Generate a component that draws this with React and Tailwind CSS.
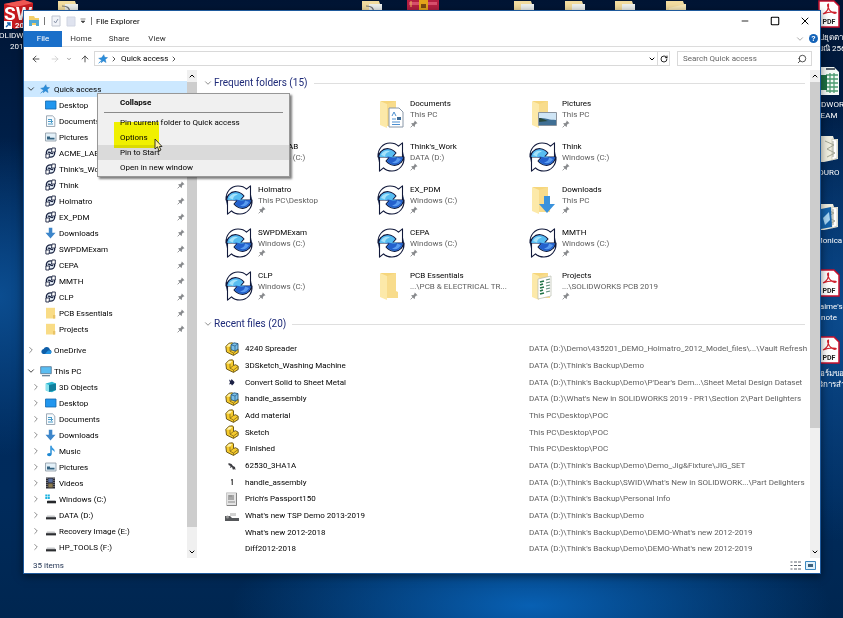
import React from "react";
import {
  ArrowLeft, ArrowRight, ArrowUp, ChevronDown, ChevronRight, ChevronUp,
  Minus, RotateCw, Search, Square, X,
} from "lucide-react";

function PdmIcon({ className }) {
  const arrow = "M1 15C.5 7 6 1 13 1c3.500 0 6.500 1 8.500 3.200L25.500.8V15H15.500l3.500-4C15 6 8 5 4 9.500 2.500 11 1.500 13 1 15z";
  return (
    <svg viewBox="0 0 28 30" className={className} aria-hidden="true">
      <circle cx="14" cy="15" r="12.500" fill="#3f8fe6" stroke="#10183a" />
      <path d={arrow} fill="#fff" stroke="#10183a" strokeWidth="1.100" strokeLinejoin="round" />
      <path d={arrow} transform="rotate(180 14 15)" fill="#fff" stroke="#10183a" strokeWidth="1.100" strokeLinejoin="round" />
      <path d="M2.500 15C3 10 7 7 11 7.500c3 0 5 1.500 7 3.500l-3 3.500h5l-3 2.500-5-2H2.500z" fill="#58bdf0" />
      <path d="M25.500 15c-.5 5-4.500 8-8.500 7.500-3 0-5-1.500-7-3.500l3-3.500H8l3-1 5 1z" fill="#2460cc" />
      <path d="M4 13c2-4 6-5 9-3.500C10 10 8 12 8 14.500z" fill="#a5e2fa" />
      <path d="M24 17c-2 4-6 5-9 3.500 3-.5 5-2.500 5-5z" fill="#5a9cf0" />
    </svg>
  );
}

function SmallPdm() {
  return (
    <svg viewBox="0 0 12 12" className="h-3 w-3" aria-hidden="true">
      <circle cx="5.500" cy="6" r="4.200" fill="#e4edf6" stroke="#1b2442" strokeWidth="1.300" />
      <path d="M7 1h3.300v4H6.500zM4 11H.9V7h3.600z" fill="#fff" stroke="#1b2442" strokeWidth="0.900" />
      <path d="M3 5.600c1.500-1.800 3.300 2 5 .6" stroke="#1b2442" strokeWidth="1.500" fill="none" />
    </svg>
  );
}

function BigFolder({ kind }) {
  return (
    <svg viewBox="0 0 28 30" className="h-[30px] w-7" aria-hidden="true">
      <path d="M4 2h15v24H4z" fill="#f6d67c" />
      <path d="M3 2l7 3v24l-7-3z" fill="#fce9a9" />
      <path d="M10 5l9-3v18l2 1v6H10z" fill="#f8dc8c" />
      {kind === "documents" && (
        <g>
          <path d="M12 9h10l4 4v15H12z" fill="#fff" stroke="#8a98a8" />
          <path d="M15 17l2-4 2 4M15 20h4M15 23h8M15 25.500h8" stroke="#4c8fd0" fill="none" />
          <path d="M20 18h4v3h-4z" fill="#3d6b96" />
        </g>
      )}
      {kind === "pictures" && (
        <g>
          <path d="M9.500 13.500h18v13h-18z" fill="#cfe5f5" stroke="#8b949e" />
          <path d="M10 20c5-2 8 1 17 1v5H10z" fill="#3f6f94" />
          <path d="M10 19c4 0 5 2 9 3l-9 1z" fill="#28493e" />
        </g>
      )}
      {kind === "downloads" && <path d="M15 11h6v8h5l-8 9-8-9h5z" fill="#3a92dc" />}
      {kind === "projects" && (
        <g>
          <path d="M9 8l13-3v20l-13 3z" fill="#fff" stroke="#b8bcae" strokeWidth=".7" />
          <path d="M11 11l4-1M11 14l3-1M11 17l4-1M11 20l3-1M11 23l4-1" stroke="#217346" strokeWidth="1.800" />
          <path d="M17 9l4-1M17 12l4-1M17 15l4-1M17 18l4-1M17 21l4-1" stroke="#5d8b78" strokeWidth="1.200" />
        </g>
      )}
    </svg>
  );
}

function Star() {
  return (
    <svg viewBox="0 0 12 12" className="h-2.5 w-2.5 shrink-0" aria-hidden="true">
      <path d="M7 .8l1 3.200 3.500.3-2.800 2.300 1 3.700-3.200-2-2.800 2.300.4-3.300L.8 5.200l3.500-.8z" fill="#2a8ddb" stroke="#2378bd" strokeWidth=".5" />
      <path d="M.8 11.200l3-3.200" stroke="#2a8ddb" />
    </svg>
  );
}

function Pin() {
  return (
    <svg viewBox="0 0 10 10" className="h-2 w-2 shrink-0" aria-hidden="true">
      <path d="M6 .7l3.300 3.300-1 .6-.6-.1-1.600 1.600.1 1.800-.8.7L1.600 4.700l.7-.8 1.800.1 1.600-1.700-.1-.7z" fill="#87898c" />
      <path d="M3.600 6.400L.8 9.200" stroke="#87898c" strokeWidth="1.100" />
    </svg>
  );
}

const glyphs = {
  desktop: <path d="M.5 2h10.500v8H.5z" fill="#2196ee" stroke="#1468ac" strokeWidth=".8" />,
  documents: (
    <g><path d="M1.500.8h6L9.800 3v8.500H1.500z" fill="#f7fbfe" stroke="#8796a5" strokeWidth=".8" /><path d="M3 4.500h3M3 6.500h5M3 9h5M6.500 4v4" stroke="#4b9bc8" /></g>
  ),
  pictures: (
    <g><path d="M.5 2H11v8H.5z" fill="#e3f0f8" stroke="#8996a1" strokeWidth=".8" /><path d="M2 5.500h3v1.200h4.500V8.500H2z" fill="#33617f" /></g>
  ),
  downloads: <path d="M3.800.8h3.500v5h3.200L5.500 11.500.5 5.800h3.300z" fill="#3d86ca" />,
  folder: <g><path d="M1 .8h9v10.700H1z" fill="#f9dc86" /><path d="M8 8h2.300v3.500H8z" fill="#e9c367" /></g>,
  onedrive: <g><path d="M3 10h7a2.300 2.300 0 0 0 0-4.300A3.400 3.400 0 0 0 3.600 5 2.600 2.600 0 0 0 3 10z" fill="#0e5ea8" /><path d="M5 10l3-3.500h2.500A2 2 0 0 1 10 10z" fill="#2392e0" /></g>,
  pc: <g><path d="M.7 1.700h10.600v7H.7z" fill="#59bdf2" stroke="#56718a" strokeWidth=".8" /><path d="M2 10.700h8" stroke="#5c7990" strokeWidth="1.200" /></g>,
  objects: <g><path d="M.8 2.500L7 .8l4 1.700V9L7 11.300.8 9.500z" fill="#2cb8d2" /><path d="M4 4l7-1.500V9L4 11z" fill="#127f9c" /><path d="M.8 2.500L4 4v7L.8 9.500z" fill="#8ae2ee" /></g>,
  music: <g><path d="M6 .8v8.500" stroke="#1e88d2" strokeWidth="1.400" /><path d="M6 .8c1 2.500 4.500 3 3.500 6.500C9 5.500 7.500 5 6 4.500z" fill="#3a9be0" /><ellipse cx="4.300" cy="9.600" rx="2.300" ry="1.700" fill="#1e88d2" /></g>,
  videos: <g><path d="M1 .5h9v11H1z" fill="#2b2b33" /><path d="M3.300 1.500h4.400v4H3.300z" fill="#5a6fa0" /><path d="M3.300 6.500h4.400v4H3.300z" fill="#8a7a50" /><path d="M2 1v10M9 1v10" stroke="#c9c9d0" strokeDasharray="1 1" strokeWidth=".8" /></g>,
  windows: <g><path d="M.3 1.500h2v2h-2zM2.800 1.500h2v2h-2zM.3 4h2v2h-2zM2.800 4h2v2h-2z" fill="#1db2df" /><path d="M2.500 7h8v1h-8z" fill="#b9bcbf" /><path d="M2 8h9v2.300H2z" fill="#26282b" /></g>,
  drive: <g><path d="M2 6.500h7.500L11 8.500H1z" fill="#c6c8ca" /><path d="M1 8.200h10v2.200H1z" fill="#2c2e31" /></g>,
};

function NavIcon({ name }) {
  if (name === "pdm") return <SmallPdm />;
  return <svg viewBox="0 0 12 12" className="h-3 w-3 shrink-0" aria-hidden="true">{glyphs[name]}</svg>;
}

function FileIcon({ name }) {
  return (
    <svg viewBox="0 0 14 14" className="h-3.5 w-3.5" aria-hidden="true">
      {(name === "assembly" || name === "part") && (
        <g>
          <path d="M.8 4.500L4 1.200 7.500.8 8.500 2v4.500l2-.8 2.700 1.500v3.300L8.500 13.400 1.500 10z" fill="#f6cb2c" stroke="#5f4c12" strokeWidth=".9" strokeLinejoin="round" />
          <path d="M1.500 4.500L4.300 1.800l3 .1L5 4.800z" fill="#fff1a8" />
          <path d="M5 4.800v4.400L8.500 11l4.500-3.500M8.500 11v2.200M5 9.200l3.500-2.700" stroke="#87691a" strokeWidth=".8" fill="none" />
          {name === "assembly" && <g><path d="M6 2.800l3-2 4 .8v5.500l-3 2-4-1.500z" fill="#79bfe9" stroke="#26587e" strokeWidth=".9" /><path d="M6 2.800l4 1.200 3-2.400M10 4v5" stroke="#26587e" strokeWidth=".7" fill="none" /></g>}
        </g>
      )}
      {name === "metal" && <path d="M4 4.500l2 1.200.5-1.700 3 3-.5 1.500-2 2-1-1.500-2 .5 1-2z" fill="#1c2145" />}
      {name === "jig" && <path d="M3.500 4l3 1 1.500 2 2 1 .5 3-1.500-1-1 1-1-3-2 1 .5-2-2-1z" fill="#3d3d42" />}
      {name === "handle" && <path d="M6.500 4h1.300v6H6.700V5.500h-.8z" fill="#383838" />}
      {name === "passport" && <g><path d="M1.500.8h10v12.700h-10z" fill="#e4e4e4" stroke="#b6b6b6" strokeWidth=".7" /><path d="M3 3h6v5H3z" fill="#a8a8a8" /><path d="M3 10h7M4 4h3" stroke="#8a8a8a" /><path d="M11.500 1v12.500H2" stroke="#666" fill="none" strokeWidth=".7" /></g>}
      {name === "demo" && <g><path d="M0 7h5l2 2h7v3H0z" fill="#55575a" /><path d="M5 4h6v3H5z" fill="#d2d2d2" /><circle cx="2.500" cy="8" r="1.500" fill="#999" /></g>}
    </svg>
  );
}

const quick = [
  ["Desktop", "desktop"], ["Documents", "documents"], ["Pictures", "pictures"],
  ["ACME_LAB", "pdm"], ["Think's_Work", "pdm"], ["Think", "pdm"], ["Holmatro", "pdm"],
  ["EX_PDM", "pdm"], ["Downloads", "downloads"], ["SWPDMExam", "pdm"], ["CEPA", "pdm"],
  ["MMTH", "pdm"], ["CLP", "pdm"], ["PCB Essentials", "folder"], ["Projects", "folder"],
];
const pc = [
  ["3D Objects", "objects"], ["Desktop", "desktop"], ["Documents", "documents"],
  ["Downloads", "downloads"], ["Music", "music"], ["Pictures", "pictures"], ["Videos", "videos"],
  ["Windows (C:)", "windows"], ["DATA (D:)", "drive"], ["Recovery Image (E:)", "drive"], ["HP_TOOLS (F:)", "drive"],
];
const folders = [
  ["Desktop", "This PC", "plain"], ["Documents", "This PC", "documents"], ["Pictures", "This PC", "pictures"],
  ["ACME_LAB", "Windows (C:)", "pdm"], ["Think's_Work", "DATA (D:)", "pdm"], ["Think", "Windows (C:)", "pdm"],
  ["Holmatro", "This PC\\Desktop", "pdm"], ["EX_PDM", "Windows (C:)", "pdm"], ["Downloads", "This PC", "downloads"],
  ["SWPDMExam", "Windows (C:)", "pdm"], ["CEPA", "Windows (C:)", "pdm"], ["MMTH", "Windows (C:)", "pdm"],
  ["CLP", "Windows (C:)", "pdm"], ["PCB Essentials", "...\\PCB & ELECTRICAL TR...", "plain"], ["Projects", "...\\SOLIDWORKS PCB 2019", "projects"],
];
const files = [
  ["4240 Spreader", "DATA (D:)\\Demo\\435201_DEMO_Holmatro_2012_Model_files\\...\\Vault Refresh", "assembly"],
  ["3DSketch_Washing Machine", "DATA (D:)\\Think's Backup\\Demo", "part"],
  ["Convert Solid to Sheet Metal", "DATA (D:)\\Think's Backup\\Demo\\P'Dear's Dem...\\Sheet Metal Design Dataset", "metal"],
  ["handle_assembly", "DATA (D:)\\What's New in SOLIDWORKS 2019 - PR1\\Section 2\\Part Delighters", "assembly"],
  ["Add material", "This PC\\Desktop\\POC", "part"],
  ["Sketch", "This PC\\Desktop\\POC", "part"],
  ["Finished", "This PC\\Desktop\\POC", "part"],
  ["62530_3HA1A", "DATA (D:)\\Think's Backup\\Demo\\Demo_Jig&Fixture\\JIG_SET", "jig"],
  ["handle_assembly", "DATA (D:)\\Think's Backup\\SWID\\What's New in SOLIDWORK...\\Part Delighters", "handle"],
  ["Prich's Passport150", "DATA (D:)\\Think's Backup\\Personal Info", "passport"],
  ["What's new TSP Demo 2013-2019", "DATA (D:)\\Think's Backup\\Demo", "demo"],
  ["What's new 2012-2018", "DATA (D:)\\Think's Backup\\Demo\\DEMO-What's new 2012-2019", ""],
  ["Diff2012-2018", "DATA (D:)\\Think's Backup\\Demo\\DEMO-What's new 2012-2019", ""],
];

function NavItem({ label, icon, expandable, pinned }) {
  return (
    <li>
      <button className="flex h-4 w-full items-center pr-0.5 pl-[7px] text-left">
        <span className="w-3.5 shrink-0">{expandable && <ChevronRight className="h-2.5 w-2.5 text-[#777]" />}</span>
        <NavIcon name={icon} />
        <span className="ml-0.5 flex-1 whitespace-nowrap">{label}</span>
        {pinned && <Pin />}
      </button>
    </li>
  );
}

function NavRoot({ label, icon, open, selected }) {
  const Chevron = open ? ChevronDown : ChevronRight;
  return (
    <button className={selected ? "flex h-4 w-full items-center bg-[#cce8ff] pl-0.5" : "flex h-4 w-full items-center pl-0.5"}>
      <Chevron className={open ? "h-2.5 w-2.5 text-[#222]" : "h-2.5 w-2.5 text-[#777]"} />
      <span className="ml-1 flex w-3.5 shrink-0">{icon}</span>
      <span className="whitespace-nowrap">{label}</span>
    </button>
  );
}

function ScrollBar({ thumb, rest }) {
  return (
    <div className="flex w-2.5 shrink-0 flex-col bg-[#f0f0f0]">
      <button aria-label="Scroll up" className="flex h-3 items-center justify-center"><ChevronUp className="h-2 w-2" strokeWidth={3} /></button>
      <div className={thumb} />
      <div className={rest} />
      <button aria-label="Scroll down" className="flex h-3 items-center justify-center"><ChevronDown className="h-2 w-2" strokeWidth={3} /></button>
    </div>
  );
}

function GroupHeader({ children }) {
  return (
    <div className="flex h-6 items-center pl-1.5">
      <ChevronDown className="h-2.5 w-2.5 text-[#777]" />
      <h2 className="ml-px text-[10px] leading-[14px] whitespace-nowrap text-[#1e2a78]">{children}</h2>
      <div className="mr-[5px] ml-1.5 h-px flex-1 bg-[#dfdfdf]" />
    </div>
  );
}

function PdfIcon() {
  return (
    <svg viewBox="0 0 22 28" className="h-7 w-[22px]" aria-hidden="true">
      <path d="M1 1h15l5 5v21H1z" fill="#fff" stroke="#c8102e" strokeWidth="1.500" />
      <path d="M5 14c4-2 6-6 5.500-10-1.500 0-1 3 1 6 2 2.500 5 4 6.500 3s-6-2-13 1z" fill="none" stroke="#d0202c" strokeWidth="1.200" />
      <text x="11" y="24" fontSize="7" fontWeight="700" textAnchor="middle" fill="#222" fontFamily="Roboto, sans-serif">PDF</text>
    </svg>
  );
}

function SheetIcon() {
  return (
    <svg viewBox="0 0 22 28" className="h-7 w-[22px]" aria-hidden="true">
      <path d="M3 0h13l5 5v23H3z" fill="#f5faf7" />
      <path d="M8 8h12M8 12h12M8 16h12M8 20h12M8 24h12M12 6v20M16 6v20" stroke="#4b9b70" strokeWidth="1.300" />
      <path d="M0 8h9v15H0z" fill="#1d7044" />
      <path d="M8 2h9" stroke="#56616b" strokeWidth="2" />
    </svg>
  );
}

function PapersIcon({ blue }) {
  return (
    <svg viewBox="0 0 22 28" className="h-7 w-[22px]" aria-hidden="true">
      <path d="M3 1h12l1 3h4v20l-14 3H3z" fill="#efeee0" />
      <path d="M14 4l5 1v18l-5 2z" fill="#fff" stroke="#b9b9a5" strokeWidth=".6" />
      <path d="M7 6l9 4-7 4 8 4-8 4M15 6v16" stroke="#9c9f8d" fill="none" strokeWidth=".9" />
      {blue && <g><path d="M3 6l10-2 1 20-11 2z" fill="#1463ab" /><path d="M5 15l6-6 1 8-5 5z" fill="#a8d6f3" /></g>}
    </svg>
  );
}

function SideIcon({ top, icon, lines }) {
  return (
    <div className={`absolute -right-[22px] flex w-[72px] flex-col items-center text-center text-white ${top}`}>
      {icon}
      <div className="mt-1 whitespace-nowrap">{lines.map((l) => <div key={l}>{l}</div>)}</div>
    </div>
  );
}

function PeekFolder({ left, mark }) {
  return (
    <svg viewBox="0 0 20 12" className={`absolute top-px h-3 w-5 ${left}`} aria-hidden="true">
      <path d="M0 0h17l1 3h2v9H0z" fill="#f3dda0" />
      {mark === "plain" ? <path d="M3 7l17-4v9H3z" fill="#f9e9b8" /> : <path d="M7 3h13v9H7z" fill="#eef1ee" />}
      {mark === "curve" && <path d="M4 5c6 0 7 2 8 6" stroke="#6f7075" fill="none" strokeWidth="1.200" />}
    </svg>
  );
}

export default function App() {
  return (
    <div className="relative min-h-screen overflow-hidden bg-[#002555] bg-[radial-gradient(ellipse_300px_90px_at_63%_98%,#0860b3,transparent),radial-gradient(ellipse_120px_160px_at_0%_48%,#0b4d90,transparent),radial-gradient(ellipse_160px_220px_at_100%_52%,#0b4a8c,transparent),linear-gradient(#001534,#00295c_45%,#002b5c_80%,#002650)] font-[Roboto,'Noto_Sans',sans-serif] text-[8px] leading-[11px] text-black">
      <div className="absolute top-0 -left-5 flex w-[78px] flex-col items-center text-center text-white">
        <svg viewBox="0 0 30 30" className="h-[30px] w-[30px]" aria-hidden="true">
          <path d="M0 4L20 0l9 3v22l-18 4-11-4z" fill="#c81b20" />
          <path d="M0 4L20 0l9 3-17 4z" fill="#ee5753" />
          <text x="0" y="20" fontSize="19" fontWeight="700" fill="#fff" fontFamily="Roboto, sans-serif">SW</text>
          <path d="M0 21h8v8H0z" fill="#fff" /><path d="M2 27l4-4M3 23h3v3" stroke="#1766b0" fill="none" strokeWidth="1.300" />
          <text x="11" y="28" fontSize="8" fontWeight="700" fill="#fff" fontFamily="Roboto, sans-serif">2019</text>
        </svg>
        <div className="whitespace-nowrap">SOLIDWORKS</div>
        <div>2019</div>
      </div>
      <PeekFolder left="left-[58px]" mark="curve" />
      <PeekFolder left="left-[362px]" mark="curve" />
      <svg viewBox="0 0 32 12" className="absolute top-0 left-[407px] h-3 w-8" aria-hidden="true">
        <path d="M0 0h32v12H0z" fill="#b51f42" /><path d="M2 2h28v3H2z" fill="#d8506d" /><path d="M12 0h9v12h-9z" fill="#e5a51b" /><path d="M14 4h5v4h-5z" fill="#7c4b12" /><path d="M4 1v6" stroke="#f2bd59" />
      </svg>
      <PeekFolder left="left-[514px]" mark="doc" />
      <PeekFolder left="left-[565px]" mark="doc" />
      <PeekFolder left="left-[615px]" mark="doc" />
      <PeekFolder left="left-[666px]" mark="plain" />

      <SideIcon top="top-0" icon={<PdfIcon />} lines={["สรุปยุดตาม", "ฉบับณิ 2561"]} />
      <SideIcon top="top-[67px]" icon={<SheetIcon />} lines={["SOLIDWORKS", "EAM"]} />
      <SideIcon top="top-[135px]" icon={<PapersIcon />} lines={["DURO"]} />
      <SideIcon top="top-[203px]" icon={<PapersIcon blue />} lines={["Monica"]} />
      <SideIcon top="top-[269px]" icon={<PdfIcon />} lines={["Taime's", "note"]} />
      <SideIcon top="top-[336px]" icon={<PdfIcon />} lines={["ฟอร์มขอ", "บริการสำ"]} />

      <main className="relative mt-2.5 mr-[22px] ml-[23px] border border-[#1f5a9c] bg-white shadow-[0_2px_8px_rgba(0,0,0,0.5)]">
        <header className="flex h-5 items-center pl-1">
          <svg viewBox="0 0 12 12" className="h-3 w-3" aria-hidden="true"><path d="M1 1h5l1 2h4v7H1z" fill="#f4cf68" /><path d="M1 5h10v6H8V8H4v3H1z" fill="#52a8d4" /></svg>
          <span className="ml-1 h-2 w-px bg-[#777]" />
          <svg viewBox="0 0 10 12" className="ml-1.5 h-3 w-2.5" aria-hidden="true"><path d="M1 1h8v10H1z" fill="#f1f3f8" stroke="#c0c5d0" /><path d="M3 6l1.500 2L7 4" stroke="#8a94a8" fill="none" /></svg>
          <svg viewBox="0 0 10 12" className="ml-[5px] h-3 w-2.5" aria-hidden="true"><path d="M1 2h8v9H1z" fill="#dfe3ef" stroke="#d0d5e2" /></svg>
          <svg viewBox="0 0 6 6" className="ml-1 h-1.5 w-1.5" aria-hidden="true"><path d="M.5 1h5M1 3h4L3 5z" stroke="#444" fill="#444" strokeWidth=".6" /></svg>
          <span className="ml-[5px] h-2 w-px bg-[#777]" />
          <h1 className="ml-1 flex-1">File Explorer</h1>
          <button aria-label="Minimize" className="flex w-[30px] justify-center"><Minus className="h-2.5 w-2.5" /></button>
          <button aria-label="Maximize" className="flex w-[30px] justify-center"><Square className="h-2.5 w-2.5" strokeWidth={2.500} /></button>
          <button aria-label="Close" className="flex w-[30px] justify-center"><X className="h-3 w-3" /></button>
        </header>

        <nav className="flex h-4 items-center border-b border-[#dcdcdc] text-[#333]">
          <button className="h-4 w-[38px] bg-[#1a6fc9] text-white">File</button>
          <button className="w-[38px]">Home</button>
          <button className="w-[38px]">Share</button>
          <button className="w-[38px]">View</button>
          <span className="flex-1" />
          <button aria-label="Expand the ribbon"><ChevronDown className="h-2.5 w-2.5 text-[#999]" /></button>
          <button aria-label="Help" className="mr-0.5 ml-1 h-[9px] w-[9px] rounded-full bg-[#1463b8] text-[8px] leading-[9px] font-bold text-white">?</button>
        </nav>

        <div className="flex h-[23px] items-center pr-2 pl-[7px]">
          <button aria-label="Back"><ArrowLeft className="h-2.5 w-2.5 text-[#333]" /></button>
          <button aria-label="Forward" className="ml-[9px]"><ArrowRight className="h-2.5 w-2.5 text-[#ccc]" /></button>
          <button aria-label="Recent locations" className="ml-1.5"><ChevronDown className="h-1.5 w-1.5 text-[#777]" strokeWidth={3} /></button>
          <button aria-label="Up" className="ml-2"><ArrowUp className="h-2.5 w-2.5 text-[#333]" /></button>
          <div className="ml-1 flex h-[15px] flex-1 items-center border border-[#d9d9d9] pl-[3px]">
            <Star />
            <ChevronRight className="ml-0.5 h-2 w-2" />
            <a href="#quick" className="ml-[3px]">Quick access</a>
            <ChevronRight className="ml-0.5 h-2 w-2" />
            <span className="flex-1" />
            <button aria-label="Previous locations"><ChevronDown className="h-2 w-2" strokeWidth={3} /></button>
            <button aria-label="Refresh" className="ml-px flex h-[13px] w-3 items-center justify-center border-l border-[#d9d9d9]"><RotateCw className="h-2 w-2" strokeWidth={2.500} /></button>
          </div>
          <label className="ml-[7px] flex h-[15px] w-[135px] items-center border border-[#d9d9d9] pr-1 pl-[5px]">
            <input type="search" aria-label="Search Quick access" placeholder="Search Quick access" className="min-w-0 flex-1 outline-none placeholder:text-[#666]" />
            <Search className="h-2.5 w-2.5 -scale-x-100 text-[#333]" />
          </label>
        </div>

        <div className="flex">
          <aside className="flex w-[173px] shrink-0">
            <div className="min-w-0 flex-1 pt-[11px] pb-[3px]">
              <NavRoot label="Quick access" icon={<Star />} open selected />
              <ul>{quick.map(([l, i], n) => <NavItem key={l} label={l} icon={i} pinned={n > 0} />)}</ul>
              <div className="py-[5px]"><NavRoot label="OneDrive" icon={<NavIcon name="onedrive" />} /></div>
              <NavRoot label="This PC" icon={<NavIcon name="pc" />} open />
              <ul>{pc.map(([l, i]) => <NavItem key={l} label={l} icon={i} expandable />)}</ul>
            </div>
            <ScrollBar thumb="grow-[445] bg-[#cdcdcd]" rest="grow-[19]" />
          </aside>

          <section className="min-w-0 flex-1 pt-px">
            <GroupHeader>Frequent folders (15)</GroupHeader>
            <ul className="grid grid-cols-[repeat(auto-fill,152px)] pt-0.5 pl-7">
              {folders.map(([name, place, kind]) => (
                <li key={name}>
                  <button className="flex h-[43px] w-full items-start pt-px text-left">
                    <span className="w-[33px] shrink-0 pt-px">{kind === "pdm" ? <PdmIcon className="h-[30px] w-7" /> : <BigFolder kind={kind} />}</span>
                    <span className="flex flex-col whitespace-nowrap">
                      <span>{name}</span>
                      <span className="text-[#5e5e5e]">{place}</span>
                      <Pin />
                    </span>
                  </button>
                </li>
              ))}
            </ul>
            <GroupHeader>Recent files (20)</GroupHeader>
            <div className="pt-1 pl-7">
              <table className="w-full table-fixed border-collapse whitespace-nowrap">
                <colgroup>
                  <col className="w-5" />
                  <col className="w-[284px]" />
                  <col />
                </colgroup>
                <tbody>
                  {files.map(([name, path, icon]) => (
                    <tr key={name + path} className="h-[17px] nth-[3n]:h-4">
                      <td className="p-0"><FileIcon name={icon} /></td>
                      <td className="p-0">{name}</td>
                      <td className="p-0 text-[#5e5e5e]">{path}</td>
                    </tr>
                  ))}
                </tbody>
              </table>
            </div>
          </section>
          <ScrollBar thumb="grow-[346] bg-[#cdcdcd]" rest="grow-[118]" />
        </div>

        <footer className="flex h-[15px] items-center justify-between pr-1 pl-[9px] text-[#1e3050]">
          <span>35 items</span>
          <span className="flex gap-1">
            <button aria-label="Details view"><svg viewBox="0 0 11 9" className="h-[9px] w-[11px]" aria-hidden="true"><path d="M.5 1h2M.5 4.500h2M.5 8h2M4 1h3M4 4.500h3M4 8h3M8 1h3M8 4.500h3M8 8h3" stroke="#5d6570" /></svg></button>
            <button aria-label="Large icons view"><svg viewBox="0 0 11 9" className="h-[9px] w-[11px]" aria-hidden="true"><path d="M.5.5h10v8H.5z" fill="#dff0fb" stroke="#3c87bf" /><path d="M3 3h5v3H3z" fill="#3d617d" /></svg></button>
          </span>
        </footer>

        <div role="menu" className="absolute top-[82px] left-[73px] w-[193px] border border-[#979797] bg-[#f0f0f0] py-px shadow-[2px_2px_2px_rgba(0,0,0,0.5)]">
          <button role="menuitem" className="block h-[15px] w-full pl-[22px] text-left font-bold">Collapse</button>
          <div className="mx-1.5 my-0.5 h-px bg-[#8a8a8a]" />
          <button role="menuitem" className="block h-[15px] w-full pl-[22px] text-left">Pin current folder to Quick access</button>
          <button role="menuitem" className="block h-[15px] w-full pl-[22px] text-left">Options</button>
          <button role="menuitem" className="block h-[15px] w-full bg-[#dadada] pl-[22px] text-left">Pin to Start</button>
          <button role="menuitem" className="block h-[15px] w-full pl-[22px] text-left">Open in new window</button>
          <div className="absolute top-7 left-4 h-[26px] w-[45px] bg-[#ffff00] mix-blend-multiply" />
          <svg viewBox="0 0 9 14" className="absolute top-11 left-14 h-3.5 w-[9px]" aria-hidden="true"><path d="M1 1v10l2.500-2.200L5 13l2-1-1.700-3.500H8z" fill="#fff2a0" stroke="#222" strokeWidth=".9" /></svg>
        </div>
      </main>
    </div>
  );
}
